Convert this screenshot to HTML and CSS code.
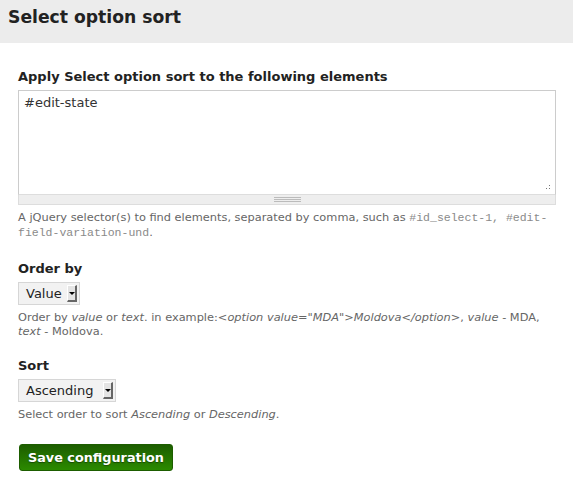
FILE: index.html
```html
<!DOCTYPE html>
<html>
<head>
<meta charset="utf-8">
<link rel="stylesheet" href="styles.css">
</head>
<body>
<div class="page-header"><h1 class="page-title">Select option sort</h1></div>
<form class="content">
  <div class="form-item">
    <label class="form-label">Apply Select option sort to the following elements</label>
    <div class="resizable">
      <div class="textarea-box">
        <textarea class="textarea">#edit-state</textarea>
        <svg class="resize-dots" width="5" height="5" viewBox="0 0 5 5"><rect x="3" y="0" width="1" height="1" fill="#777"/><rect x="0" y="3" width="1" height="1" fill="#777"/><rect x="3" y="3" width="1" height="1" fill="#777"/></svg>
      </div>
      <div class="grippie"><span class="grip-lines"></span></div>
    </div>
    <div class="description">A jQuery selector(s) to find elements, separated by comma, such as <code>#id_select-1, #edit-field-variation-und</code>.</div>
  </div>
  <div class="form-item">
    <label class="form-label">Order by</label>
    <span class="select select-short"><span class="select-value">Value</span><span class="select-arrow"></span></span>
    <div class="description">Order by <em>value</em> or <em>text</em>. in example:<em>&lt;option value="MDA"&gt;Moldova&lt;/option&gt;</em>, <em>value</em> - MDA, <em>text</em> - Moldova.</div>
  </div>
  <div class="form-item">
    <label class="form-label">Sort</label>
    <span class="select select-long"><span class="select-value">Ascending</span><span class="select-arrow"></span></span>
    <div class="description">Select order to sort <em>Ascending</em> or <em>Descending</em>.</div>
  </div>
  <div class="actions">
    <button type="button" class="button-primary">Save configuration</button>
  </div>
</form>
</body>
</html>
```

FILE: styles.css
```css
html, body {
  margin: 0;
  padding: 0;
  background: #fff;
}
body {
  font-family: "DejaVu Sans", Verdana, sans-serif;
  font-size: 13px;
  color: #333;
}
.page-header {
  background: #ececec;
  height: 43px;
  padding: 0 8px;
  box-sizing: border-box;
}
.page-title {
  margin: 0;
  padding-top: 5px;
  font-size: 17.2px;
  line-height: 24px;
  font-weight: bold;
  color: #222;
}
.content {
  padding: 26px 17px 0 18px;
}
.form-item {
  margin-bottom: 20px;
}
.form-item:first-child {
  margin-bottom: 21px;
}
.form-label {
  display: block;
  font-weight: bold;
  font-size: 13px;
  line-height: 16px;
  color: #222;
  margin-bottom: 5px;
}
.resizable {
  display: flex;
  flex-direction: column;
}
.textarea-box {
  position: relative;
}
.textarea {
  display: block;
  box-sizing: border-box;
  width: 100%;
  height: 105px;
  margin: 0;
  padding: 4px 5px;
  border: 1px solid #ccc;
  border-bottom-color: #ddd;
  font-family: "DejaVu Sans", Verdana, sans-serif;
  font-size: 13px;
  line-height: 16px;
  color: #333;
  resize: none;
  outline: none;
}
.resize-dots {
  position: absolute;
  right: 5px;
  bottom: 5px;
}
.grippie {
  height: 9px;
  background: #eee;
  border: 1px solid #ddd;
  border-top: 0;
  display: flex;
  justify-content: center;
  align-items: center;
}
.grip-lines {
  width: 27px;
  height: 5px;
  border-top: 1px solid #bbb;
  border-bottom: 1px solid #bbb;
  box-sizing: border-box;
  position: relative;
}
.grip-lines::after {
  content: "";
  position: absolute;
  left: 0;
  right: 0;
  top: 1px;
  border-top: 1px solid #bbb;
}
.description {
  font-size: 11.375px;
  line-height: 14px;
  color: #666;
  margin-top: 5px;
}
.description code {
  font-family: "Liberation Mono", "Courier New", monospace;
  font-size: 11.5px;
  color: #8a8a8a;
}
.description em {
  font-style: italic;
}
.select {
  display: inline-flex;
  align-items: center;
  box-sizing: border-box;
  height: 23px;
  border: 1px solid #d6d6d6;
  background: #f2f2f2;
  padding: 0 2px 0 7px;
  font-size: 13px;
  color: #222;
  vertical-align: top;
}
.select-short { width: 62px; }
.select-long { width: 98px; }
.select-value {
  flex: 1;
}
.select-arrow {
  width: 10px;
  height: 17px;
  box-sizing: border-box;
  background: #e4e4e4;
  border-top: 1px solid #fff;
  border-left: 1px solid #fff;
  border-right: 2px solid #666;
  border-bottom: 2px solid #666;
  position: relative;
}
.select-arrow::after {
  content: "";
  position: absolute;
  left: 1px;
  top: 6px;
  border-left: 3px solid transparent;
  border-right: 3px solid transparent;
  border-top: 3px solid #000;
}
.actions {
  padding-top: 3px;
}
.button-primary {
  font-family: "DejaVu Sans", Verdana, sans-serif;
  font-weight: bold;
  font-size: 12.8px;
  color: #fff;
  text-shadow: 0 1px 1px rgba(0,0,0,0.4);
  background: linear-gradient(#1d5d00, #2b8a00);
  border: 1px solid #1d5d00;
  border-radius: 3px;
  height: 27px;
  padding: 0 8px;
  margin-left: 1px;
}
```
